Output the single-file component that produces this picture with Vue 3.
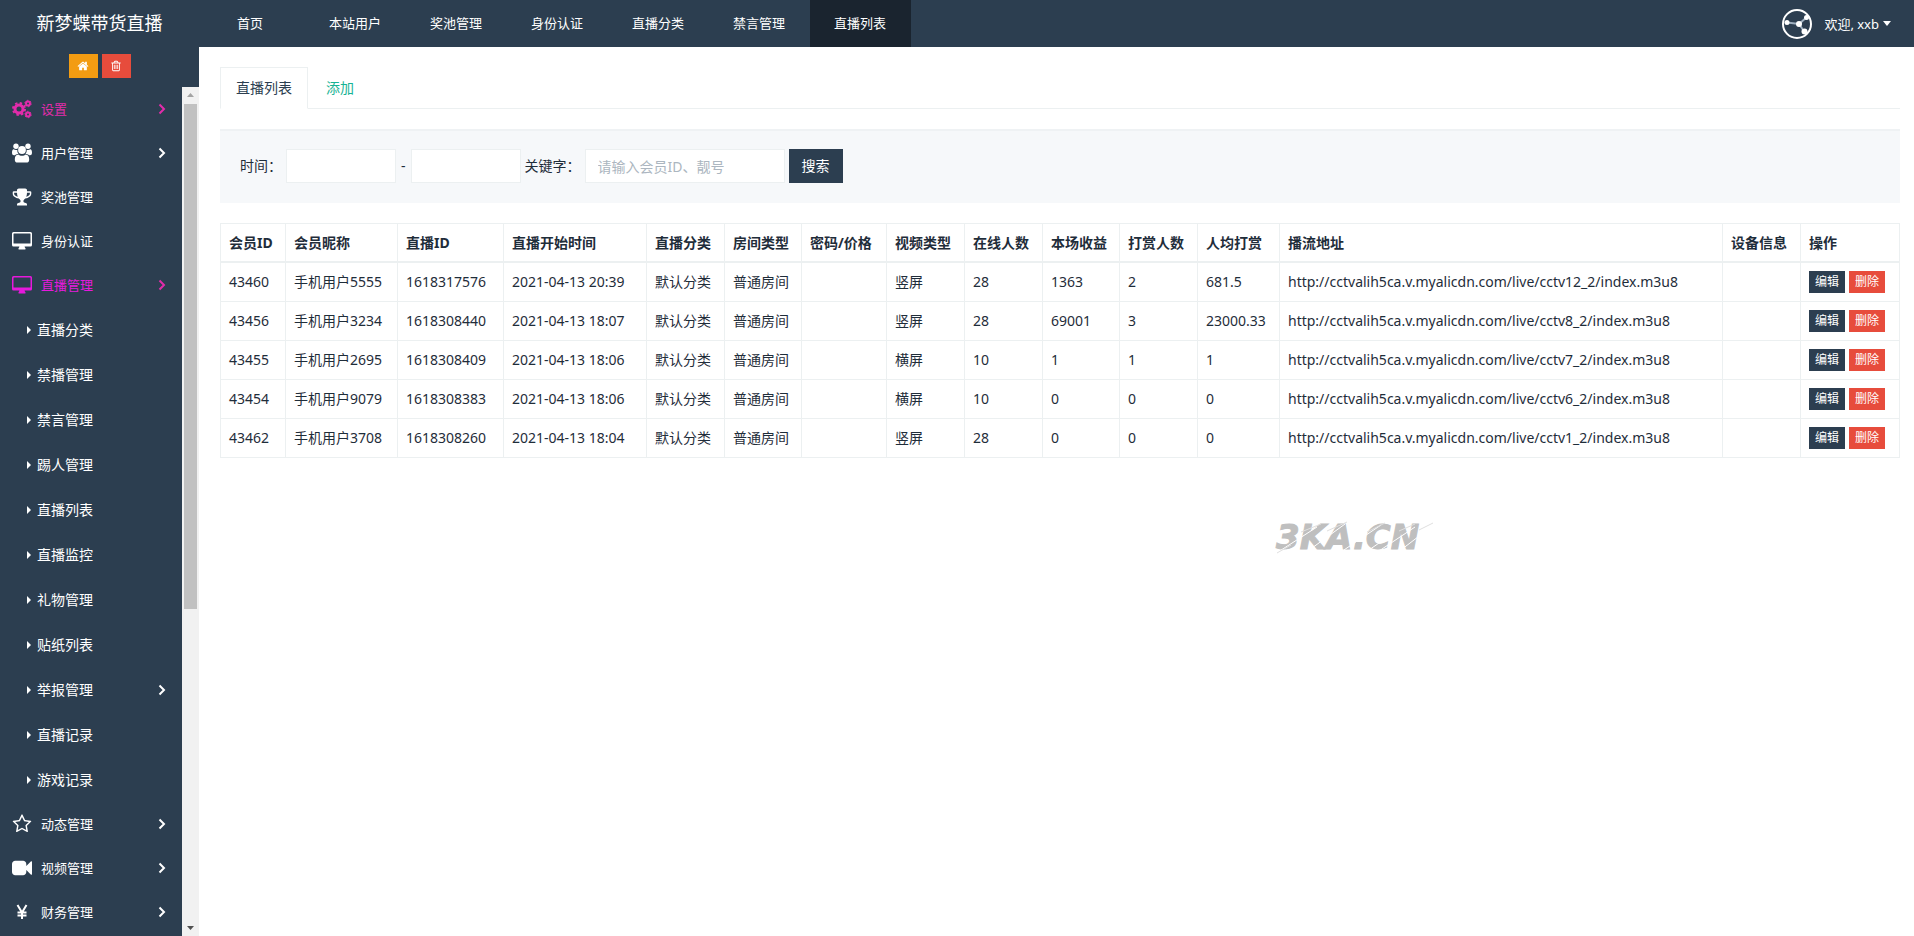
<script setup>
import { ref } from 'vue'

const tabs = ['首页', '本站用户', '奖池管理', '身份认证', '直播分类', '禁言管理', '直播列表']
const activeTab = ref('直播列表')

const children = [
  { name: '直播分类' },
  { name: '禁播管理' },
  { name: '禁言管理' },
  { name: '踢人管理' },
  { name: '直播列表' },
  { name: '直播监控' },
  { name: '礼物管理' },
  { name: '贴纸列表' },
  { name: '举报管理', arrow: true },
  { name: '直播记录' },
  { name: '游戏记录' },
]

const menu = [
  { name: '设置', icon: 'cogs', arrow: true, tone: 'rose' },
  { name: '用户管理', icon: 'group', arrow: true },
  { name: '奖池管理', icon: 'trophy' },
  { name: '身份认证', icon: 'desktop' },
  { name: '直播管理', icon: 'desktop', arrow: true, tone: 'magenta', children },
  { name: '动态管理', icon: 'star', arrow: true },
  { name: '视频管理', icon: 'video', arrow: true },
  { name: '财务管理', icon: 'yen', arrow: true },
]

const columns = [
  { key: 'uid', title: '会员ID' },
  { key: 'nick', title: '会员昵称' },
  { key: 'live', title: '直播ID' },
  { key: 'start', title: '直播开始时间' },
  { key: 'kind', title: '直播分类' },
  { key: 'room', title: '房间类型' },
  { key: 'price', title: '密码/价格' },
  { key: 'video', title: '视频类型' },
  { key: 'online', title: '在线人数' },
  { key: 'income', title: '本场收益' },
  { key: 'givers', title: '打赏人数' },
  { key: 'average', title: '人均打赏' },
  { key: 'url', title: '播流地址' },
  { key: 'device', title: '设备信息' },
]

const row = (uid, nick, live, time, video, online, income, givers, average, channel) => ({
  uid, nick: '手机用户' + nick, live, start: '2021-04-13 ' + time, kind: '默认分类', room: '普通房间',
  price: '', video, online, income, givers, average,
  url: `http://cctvalih5ca.v.myalicdn.com/live/${channel}_2/index.m3u8`, device: '',
})

const rows = [
  row('43460', '5555', '1618317576', '20:39', '竖屏', '28', '1363', '2', '681.5', 'cctv12'),
  row('43456', '3234', '1618308440', '18:07', '竖屏', '28', '69001', '3', '23000.33', 'cctv8'),
  row('43455', '2695', '1618308409', '18:06', '横屏', '10', '1', '1', '1', 'cctv7'),
  row('43454', '9079', '1618308383', '18:06', '横屏', '10', '0', '0', '0', 'cctv6'),
  row('43462', '3708', '1618308260', '18:04', '竖屏', '28', '0', '0', '0', 'cctv1'),
]
</script>

<template>
  <div class="page">
    <header class="topbar">
      <a class="brand" href="#">新梦蝶带货直播</a>
      <nav class="topnav">
        <a
          v-for="(tab, i) in tabs"
          :key="tab"
          href="#"
          class="topnav-item"
          :class="{ home: i === 0, active: activeTab === tab }"
          @click.prevent="activeTab = tab"
        >{{ tab }}</a>
      </nav>
      <button class="user" type="button">
        <svg class="avatar" viewBox="0 0 32 32" aria-hidden="true">
          <circle cx="16" cy="16" r="14" fill="none" stroke="#fff" stroke-width="2" />
          <path d="M6 14.500L18 16L26 9M18 16L23.500 24" fill="none" stroke="#9fb0c0" stroke-width="2" />
          <circle cx="6" cy="14.500" r="2.500" fill="#fff" />
          <circle cx="18" cy="16" r="3" fill="#fff" />
          <circle cx="25.500" cy="9.500" r="2.500" fill="#fff" />
          <circle cx="23.500" cy="23.500" r="3" fill="#fff" />
        </svg>
        <span>欢迎, xxb</span>
        <svg class="caret" viewBox="0 0 8 5" aria-hidden="true"><path d="M0 0h8L4 5z" fill="currentColor" /></svg>
      </button>
    </header>

    <div class="body">
      <aside class="sidebar">
        <div class="shortcuts">
          <button class="shortcut orange" type="button" aria-label="首页">
            <svg viewBox="0 0 1792 1792"><path fill="currentColor" d="M1472 992v480q0 26-19 45t-45 19h-384v-384h-256v384h-384q-26 0-45-19t-19-45v-480q0-1 .5-3t.5-3l575-474 575 474q1 2 1 6zm223-69l-62 74q-8 9-21 11h-3q-13 0-21-7l-692-577-692 577q-12 8-24 7-13-2-21-11l-62-74q-8-10-7-23.500t11-21.500l719-599q32-26 76-26t76 26l244 204v-195q0-14 9-23t23-9h192q14 0 23 9t9 23v408l219 182q10 8 11 21.500t-7 23.500z" /></svg>
          </button>
          <button class="shortcut red" type="button" aria-label="清除缓存">
            <svg viewBox="0 0 1792 1792"><path fill="currentColor" d="M704 736v576q0 14-9 23t-23 9h-64q-14 0-23-9t-9-23v-576q0-14 9-23t23-9h64q14 0 23 9t9 23zm256 0v576q0 14-9 23t-23 9h-64q-14 0-23-9t-9-23v-576q0-14 9-23t23-9h64q14 0 23 9t9 23zm256 0v576q0 14-9 23t-23 9h-64q-14 0-23-9t-9-23v-576q0-14 9-23t23-9h64q14 0 23 9t9 23zm128 724v-948h-896v948q0 22 7 40.500t14.500 27 10.500 8.500h832q3 0 10.500-8.500t14.500-27 7-40.500zm-672-1076h448l-48-117q-7-9-17-11h-317q-10 2-17 11zm928 32v64q0 14-9 23t-23 9h-96v948q0 83-47 143.500t-113 60.500h-832q-66 0-113-58.500t-47-141.500v-952h-96q-14 0-23-9t-9-23v-64q0-14 9-23t23-9h309l70-167q15-37 54-63t79-26h320q40 0 79 26t54 63l70 167h309q14 0 23 9t9 23z" /></svg>
          </button>
        </div>
        <div class="menu-area">
          <ul class="menu">
            <li v-for="item in menu" :key="item.name">
              <a class="menu-item" :class="item.tone" href="#">
                <svg v-if="item.icon === 'cogs'" class="icon" viewBox="0 0 20 20" aria-hidden="true">
                  <g fill="none" stroke="currentColor">
                    <circle cx="7" cy="10" r="4" stroke-width="3" />
                    <circle cx="7" cy="10" r="6" stroke-width="2" stroke-dasharray="2.400 2.312" />
                    <circle cx="16" cy="4.500" r="2" stroke-width="2" />
                    <circle cx="16" cy="4.500" r="3.200" stroke-width="1" stroke-dasharray="1.700 1.650" />
                    <circle cx="16" cy="15.500" r="2" stroke-width="2" />
                    <circle cx="16" cy="15.500" r="3.200" stroke-width="1" stroke-dasharray="1.700 1.650" />
                  </g>
                </svg>
                <svg v-else-if="item.icon === 'group'" class="icon" viewBox="0 0 20 20" aria-hidden="true">
                  <g fill="currentColor">
                    <circle cx="4" cy="3.300" r="2.700" />
                    <circle cx="16" cy="3.300" r="2.700" />
                    <circle cx="10" cy="7" r="3.900" />
                    <path d="M0 9.800C0 7.500.6 6.300 1.700 6.300c.6.500 1.400.8 2.300.8.500 0 1-.1 1.400-.3-.3 1.700.2 3.100 1.100 4.200C4.500 11 3.500 11.600 3 12.300H2C.8 12.300 0 11.500 0 9.800zM20 9.800c0-2.300-.6-3.500-1.700-3.500-.6.500-1.400.8-2.300.8-.5 0-1-.1-1.400-.3.3 1.700-.2 3.100-1.100 4.200 2 0 3 .6 3.500 1.300H18c1.200 0 2-.8 2-2.500z" />
                    <path d="M2.800 16.700c0-3.200 1-5.300 3.500-5.300 1 .8 2.200 1.300 3.700 1.300s2.700-.5 3.700-1.300c2.500 0 3.500 2.100 3.500 5.300 0 1.900-1.200 2.900-2.800 2.900H5.600c-1.600 0-2.800-1-2.800-2.900z" />
                  </g>
                </svg>
                <svg v-else-if="item.icon === 'trophy'" class="icon" viewBox="0 0 1792 1792" aria-hidden="true"><path fill="currentColor" d="M522 883q-74-162-74-371h-256v96q0 78 94.500 162t235.500 113zm1078-275v-96h-256q0 209-74 371 141-29 235.500-113t94.500-162zm128-128v128q0 71-41.500 143t-112 130-173 97.500-215.500 44.500q-42 54-95 95-38 34-52.500 72.500t-14.500 89.500q0 54 30.500 91t97.500 37q75 0 133.500 45.500t58.500 114.500v64q0 14-9 23t-23 9h-832q-14 0-23-9t-9-23v-64q0-69 58.500-114.500t133.500-45.500q67 0 97.500-37t30.500-91q0-51-14.500-89.500t-52.500-72.500q-53-41-95-95-113-5-215.500-44.500t-173-97.500-112-130-41.500-143v-128q0-40 28-68t68-28h288v-96q0-66 47-113t113-47h576q66 0 113 47t47 113v96h288q40 0 68 28t28 68z" /></svg>
                <svg v-else-if="item.icon === 'desktop'" class="icon" viewBox="0 0 20 20" aria-hidden="true">
                  <path fill="currentColor" fill-rule="evenodd" d="M1.500 1h17Q20 1 20 2.500v11.500q0 1.500-1.500 1.500H12.600q.1 1 .9 1.800v.6q0 .6-.6.600H7.100q-.6 0-.6-.6v-.6q.8-.8.900-1.800H1.500Q0 15.500 0 14V2.500Q0 1 1.500 1zM2 2.500q-.5 0-.5.500v9q0 .5.500.500h16q.5 0 .5-.5V3q0-.5-.5-.5z" />
                </svg>
                <svg v-else-if="item.icon === 'star'" class="icon" viewBox="0 0 1792 1792" aria-hidden="true"><path fill="currentColor" d="M1201 1004l306-297-422-62-189-382-189 382-422 62 306 297-73 421 378-199 377 199zm527-357q0 22-26 48l-363 354 86 500q1 7 1 20 0 50-41 50-19 0-40-12l-449-236-449 236q-22 12-40 12-21 0-31.500-14.500t-10.500-35.500q0-6 2-20l86-500-364-354q-25-27-25-48 0-37 56-46l502-73 225-455q19-41 49-41t49 41l225 455 502 73q56 9 56 46z" /></svg>
                <svg v-else-if="item.icon === 'video'" class="icon" viewBox="0 0 1792 1792" aria-hidden="true"><path fill="currentColor" d="M1792 352v1088q0 42-39 59-13 5-25 5-27 0-45-19l-403-403v166q0 119-84.500 203.500t-203.500 84.500h-704q-119 0-203.500-84.500t-84.500-203.500v-704q0-119 84.500-203.500t203.500-84.500h704q119 0 203.500 84.500t84.500 203.500v165l403-402q18-19 45-19 12 0 25 5 39 17 39 59z" /></svg>
                <svg v-else class="icon" viewBox="0 0 20 20" aria-hidden="true">
                  <path d="M5.500 3L10 10.500L14.500 3M10 10v7M5.500 10.500h9M5.500 13.500h9" fill="none" stroke="currentColor" stroke-width="2" />
                </svg>
                <span>{{ item.name }}</span>
                <svg v-if="item.arrow" class="angle" viewBox="0 0 8 12" aria-hidden="true"><path d="M1.500 1.500L6 6L1.500 10.500" fill="none" stroke="currentColor" stroke-width="2" /></svg>
              </a>
              <ul v-if="item.children" class="submenu">
                <li v-for="child in item.children" :key="child.name">
                  <a class="submenu-item" href="#">
                    <svg class="bullet" viewBox="0 0 4 8" aria-hidden="true"><path d="M0 0l4 4-4 4z" fill="currentColor" /></svg>
                    <span>{{ child.name }}</span>
                    <svg v-if="child.arrow" class="angle" viewBox="0 0 8 12" aria-hidden="true"><path d="M1.500 1.500L6 6L1.500 10.500" fill="none" stroke="currentColor" stroke-width="2" /></svg>
                  </a>
                </li>
              </ul>
            </li>
          </ul>
          <div class="scrollbar" aria-hidden="true">
            <svg class="scroll-arrow up" viewBox="0 0 17 17"><path d="M5 10h7L8.500 6z" fill="currentColor" /></svg>
            <div class="track"><div class="thumb"></div></div>
            <svg class="scroll-arrow" viewBox="0 0 17 17"><path d="M5 7h7l-3.500 4z" fill="currentColor" /></svg>
          </div>
        </div>
      </aside>

      <main class="content">
        <nav class="tabs">
          <a class="tab active" href="#">直播列表</a>
          <a class="tab" href="#">添加</a>
        </nav>

        <form class="search" @submit.prevent>
          <label for="from">时间：</label>
          <input id="from" class="date" type="text" />
          <label class="dash" for="to">-</label>
          <input id="to" class="date" type="text" />
          <label for="keyword">关键字：</label>
          <input id="keyword" class="keyword" type="text" placeholder="请输入会员ID、靓号" />
          <button class="submit" type="submit">搜索</button>
        </form>

        <table class="list">
          <colgroup>
            <col v-for="c in columns" :key="c.key" :class="'col-' + c.key" />
            <col class="col-actions" />
          </colgroup>
          <thead>
            <tr>
              <th v-for="c in columns" :key="c.key" scope="col">{{ c.title }}</th>
              <th scope="col">操作</th>
            </tr>
          </thead>
          <tbody>
            <tr v-for="r in rows" :key="r.uid">
              <td v-for="c in columns" :key="c.key">{{ r[c.key] }}</td>
              <td>
                <div class="actions">
                  <a class="action edit" href="#">编辑</a>
                  <a class="action delete" href="#">删除</a>
                </div>
              </td>
            </tr>
          </tbody>
        </table>

        <svg class="watermark" viewBox="0 -10 170 60" role="img" aria-label="3KA.CN">
          <text x="5" y="30" class="watermark-text">3KA.CN</text>
          <path d="M4 35L46 8M30 37L74 5M64 37L110 6M88 38L118 17M102 36L144 8M122 37L160 8" stroke="#fff" stroke-width="1" fill="none" />
          <path d="M6 34L20 26M30 13L50 5M56 12L76 3M96 13L114 4M128 12L144 5M148 11L162 4" stroke="#e0e0e0" stroke-width="1" fill="none" />
        </svg>
      </main>
    </div>
  </div>
</template>

<style>
body {
  margin: 0;
  background: #fff;
}
</style>

<style scoped>
.page {
  display: flex;
  flex-direction: column;
  height: 100vh;
  overflow: hidden;
  font-family: "Noto Sans", "Noto Sans CJK SC", sans-serif;
  font-size: 14px;
  line-height: 20px;
  color: #1f2d3a;
}

a {
  color: inherit;
  text-decoration: none;
}

button,
input {
  box-sizing: border-box;
  margin: 0;
  border: 0;
  border-radius: 0;
  font: inherit;
}

button {
  cursor: pointer;
}

ul {
  margin: 0;
  padding: 0;
  list-style: none;
}

.topbar {
  display: flex;
  flex: none;
  height: 47px;
  background: #2c3e50;
  color: #fff;
}

.brand {
  flex: none;
  width: 199px;
  font-size: 18px;
  line-height: 46px;
  text-align: center;
}

.topnav {
  display: flex;
  flex: 1;
  padding-left: 14px;
  font-size: 13px;
  line-height: 47px;
}

.topnav-item {
  padding: 0 25px 0 24px;
}

.topnav-item.home {
  padding-right: 42px;
}

.topnav-item.active {
  background: #1a242f;
}

.user {
  display: flex;
  align-items: center;
  gap: 4px;
  padding: 0 23px 0 0;
  background: transparent;
  color: #fff;
  font-size: 13px;
}

.avatar {
  width: 32px;
  height: 32px;
  margin-right: 7px;
}

.caret {
  width: 8px;
  height: 5px;
}

.body {
  display: flex;
  flex: 1;
  min-height: 0;
}

.sidebar {
  display: flex;
  flex: none;
  flex-direction: column;
  width: 199px;
  background: #2c3e50;
  color: #fff;
}

.shortcuts {
  display: flex;
  flex: none;
  justify-content: center;
  gap: 4px;
  padding: 7px 0 9px;
}

.shortcut {
  display: flex;
  align-items: center;
  justify-content: center;
  width: 29px;
  height: 24px;
  padding: 0;
  color: #fff;
}

.shortcut svg {
  width: 12px;
  height: 12px;
}

.orange {
  background: #f39c12;
}

.red {
  background: #e74c3c;
}

.menu-area {
  display: flex;
  flex: 1;
  min-height: 0;
}

.menu {
  flex: 1;
  overflow: hidden;
}

.menu-item,
.submenu-item {
  display: flex;
  align-items: center;
  padding-right: 16px;
}

.menu-item {
  gap: 9px;
  height: 44px;
  padding-left: 12px;
  font-size: 13px;
}

.submenu-item {
  gap: 6px;
  height: 45px;
  padding-left: 27px;
}

.menu-item.rose {
  color: #e22cab;
}

.menu-item.magenta {
  color: #e619dc;
}

.magenta .angle {
  color: #e22cab;
}

.icon {
  flex: none;
  width: 20px;
  height: 20px;
}

.angle {
  width: 8px;
  height: 12px;
  margin-left: auto;
}

.bullet {
  width: 4px;
  height: 8px;
}

.scrollbar {
  display: flex;
  flex: none;
  flex-direction: column;
  width: 17px;
  background: #f1f1f1;
  color: #505050;
}

.scroll-arrow {
  flex: none;
  width: 17px;
  height: 17px;
}

.scroll-arrow.up {
  color: #a3a3a3;
}

.track {
  flex: 1;
  padding: 0 2px;
}

.thumb {
  height: 62%;
  background: #c1c1c1;
}

.content {
  position: relative;
  flex: 1;
  min-width: 0;
  padding: 20px 14px 0 21px;
}

.tabs {
  display: flex;
  border-bottom: 1px solid #ecf0f1;
}

.tab {
  margin-right: 2px;
  margin-bottom: -1px;
  padding: 10px 15px;
  border: 1px solid transparent;
  color: #18b394;
}

.tab.active {
  border-color: #ecf0f1;
  border-bottom-color: #fff;
  background: #fff;
  color: #2c3e50;
}

.search {
  display: flex;
  align-items: center;
  gap: 4px;
  margin: 20px 0;
  padding: 18px 20px 20px;
  border-top: 2px solid #eff2f4;
  background: #f6f8fa;
}

.search input {
  height: 34px;
  padding: 0 12px;
  border: 1px solid #ecf0f1;
  background: #fff;
  color: #2c3e50;
}

.search input::placeholder {
  color: #acb6c0;
  opacity: 1;
}

.search .date {
  width: 110px;
}

.search .keyword {
  width: 200px;
}

.dash {
  margin: 0 1px;
}

.submit {
  height: 34px;
  padding: 0 13px;
  background: #2c3e50;
  color: #fff;
}

.list {
  width: 100%;
  border-collapse: collapse;
  table-layout: fixed;
}

.list th,
.list td {
  padding: 0 8px;
  border: 1px solid #ecf0f1;
  text-align: left;
  white-space: nowrap;
}

.list th {
  height: 37px;
  border-bottom-width: 2px;
  font-weight: 700;
}

.list td {
  height: 38px;
}

.col-uid { width: 65px; }
.col-nick { width: 112px; }
.col-live { width: 106px; }
.col-start { width: 143px; }
.col-kind,
.col-video,
.col-online,
.col-givers,
.col-device { width: 78px; }
.col-room,
.col-income { width: 77px; }
.col-price { width: 85px; }
.col-average { width: 82px; }
.col-actions { width: 99px; }

.actions {
  display: flex;
  gap: 4px;
}

.action {
  padding: 2px 6px;
  color: #fff;
  font-size: 12px;
  line-height: 18px;
}

.edit {
  background: #2c3e50;
}

.delete {
  background: #e74c3c;
}

.watermark {
  position: absolute;
  top: 462px;
  left: 62.5%;
  width: 170px;
  height: 60px;
}

.watermark-text {
  fill: #bfbfbf;
  stroke: #bfbfbf;
  stroke-width: 1px;
  font: italic 700 34px "DejaVu Sans", sans-serif;
}
</style>
